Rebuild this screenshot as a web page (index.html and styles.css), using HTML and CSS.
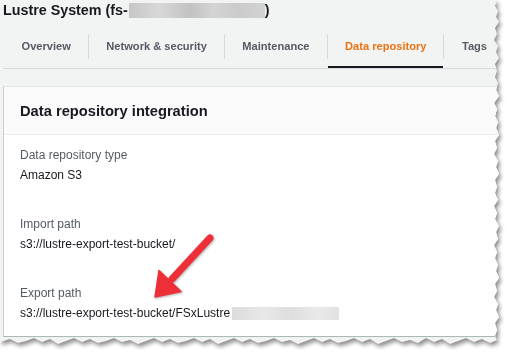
FILE: index.html
```html
<!DOCTYPE html>
<html lang="en">
<head>
	<meta charset="UTF-8">
	<title>Lustre System - Data repository</title>
	<link rel="stylesheet" href="styles.css">
</head>
<body>
	<div class="shot-wrap">
	<div class="shot">
		<h1 class="fs-title">Lustre System (fs-<span class="blur blur-id"></span>)</h1>
		<div class="tabs">
			<div class="tab">Overview</div>
			<span class="sep"></span>
			<div class="tab">Network &amp; security</div>
			<span class="sep"></span>
			<div class="tab">Maintenance</div>
			<span class="sep"></span>
			<div class="tab active">Data repository</div>
			<span class="sep"></span>
			<div class="tab">Tags</div>
		</div>
		<div class="panel">
			<div class="panel-head">Data repository integration</div>
			<div class="panel-body">
				<div class="field">
					<div class="label">Data repository type</div>
					<div class="value">Amazon S3</div>
				</div>
				<div class="field">
					<div class="label">Import path</div>
					<div class="value">s3://lustre-export-test-bucket/</div>
				</div>
				<div class="field">
					<div class="label">Export path</div>
					<div class="value">s3://lustre-export-test-bucket/FSxLustre<span class="blur blur-path"></span></div>
				</div>
			</div>
		</div>
		<svg class="arrow" width="500" height="344" viewBox="0 0 500 344">
			<line x1="210" y1="238" x2="172" y2="279" stroke="#ee2f37" stroke-width="7" stroke-linecap="round"/>
			<polygon points="155,297 159,270.5 181,291.5" fill="#ee2f37" stroke="#ee2f37" stroke-width="1.5" stroke-linejoin="round"/>
		</svg>
	</div>
	</div>
</body>
</html>
```

FILE: styles.css
```css
html, body, div, h1 {
	padding: 0;
	margin: 0;
}
body {
	background: #fff;
	font-family: "Liberation Sans", Arial, sans-serif;
	color: #16191f;
}
.shot-wrap {
	width: 505px;
	height: 350px;
	filter: drop-shadow(2px 3px 2px rgba(0,0,0,.45));
}
.shot {
	position: relative;
	width: 500px;
	height: 344px;
	overflow: hidden;
	background: #f2f3f3;
	clip-path: polygon(0 0, 497px 0, 495px 6px, 498px 11px, 496px 17px, 499px 22px, 495px 28px, 497px 34px, 494px 40px, 498px 46px, 496px 52px, 499px 58px, 495px 64px, 497px 71px, 495px 77px, 498px 83px, 496px 90px, 499px 96px, 494px 103px, 497px 109px, 495px 116px, 498px 122px, 496px 128px, 499px 135px, 495px 141px, 497px 148px, 494px 154px, 498px 161px, 496px 167px, 499px 174px, 495px 180px, 497px 187px, 495px 193px, 498px 200px, 494px 206px, 497px 213px, 495px 219px, 499px 226px, 496px 232px, 498px 239px, 494px 245px, 497px 252px, 495px 258px, 498px 265px, 496px 271px, 499px 278px, 495px 284px, 497px 291px, 494px 297px, 498px 304px, 496px 310px, 499px 317px, 495px 323px, 497px 330px, 495px 336px, 497px 340px, 490px 343px, 482px 339px, 474px 342px, 466px 338px, 458px 341px, 450px 344px, 442px 339px, 434px 342px, 426px 338px, 418px 343px, 410px 340px, 402px 342px, 394px 338px, 386px 341px, 378px 344px, 370px 339px, 362px 342px, 354px 338px, 346px 341px, 338px 343px, 330px 339px, 322px 342px, 314px 338px, 306px 341px, 298px 344px, 290px 340px, 282px 342px, 274px 338px, 266px 341px, 258px 343px, 250px 339px, 242px 342px, 234px 338px, 226px 341px, 218px 344px, 210px 339px, 202px 342px, 194px 338px, 186px 341px, 178px 343px, 170px 339px, 162px 342px, 154px 338px, 146px 341px, 138px 344px, 130px 340px, 122px 342px, 114px 338px, 106px 341px, 98px 343px, 90px 339px, 82px 342px, 74px 338px, 66px 341px, 58px 344px, 50px 339px, 42px 342px, 34px 338px, 26px 341px, 18px 343px, 10px 339px, 0 342px);
}
.fs-title {
	display: flex;
	align-items: center;
	height: 20px;
	padding-left: 3px;
	font-size: 14.3px;
	font-weight: bold;
	line-height: 20px;
	white-space: nowrap;
}
.blur {
	display: inline-block;
	flex-shrink: 0;
}
.blur-id {
	width: 136px;
	height: 15px;
	margin-left: 1px;
	background: linear-gradient(90deg, #c6c6c6, #d8d8d8 22%, #c2c2c2 45%, #d4d4d4 62%, #cbcbcb 80%, #d2d2d2);
}
.tabs {
	display: flex;
	align-items: center;
	width: 560px;
	height: 44px;
	margin: 4px 0 0 3px;
	padding-left: 1px;
	border-bottom: 1px solid #d5dbdb;
}
.tab {
	display: flex;
	align-items: center;
	flex-shrink: 0;
	height: 44px;
	box-sizing: border-box;
	padding: 2px 17px 0 17.5px;
	border-bottom: 2px solid transparent;
	font-size: 11.1px;
	font-weight: bold;
	color: #545b64;
	white-space: nowrap;
}
.tab.active {
	color: #ec7211;
	border-bottom-color: #16191f;
}
.sep {
	flex-shrink: 0;
	width: 1px;
	height: 25px;
	margin-top: 1px;
	background: #d5dbdb;
}
.panel {
	width: 560px;
	margin: 17px 0 0 3px;
	background: #fff;
	border-left: 1px solid #c9cfd0;
	border-top: 1px solid #e3e6e6;
	border-bottom: 1px solid #aab7b8;
}
.panel-head {
	display: flex;
	align-items: center;
	height: 47px;
	padding-left: 16px;
	background: #fafafa;
	border-bottom: 1px solid #eaeded;
	font-size: 14.7px;
	font-weight: bold;
}
.panel-body {
	padding: 10px 0 13px 16px;
	font-size: 12px;
	line-height: 20px;
}
.field + .field {
	margin-top: 29px;
}
.label {
	color: #545b64;
}
.value {
	display: flex;
	align-items: center;
	color: #16191f;
	white-space: nowrap;
}
.blur-path {
	width: 107px;
	height: 13px;
	margin-left: 2px;
	background: linear-gradient(90deg, #dcdcdc, #e8e8e8 30%, #dedede 55%, #e9e9e9 80%, #e2e2e2);
}
.arrow {
	position: absolute;
	left: 0;
	top: 0;
	filter: drop-shadow(1px 1px 1px rgba(0,0,0,.3));
}
```
